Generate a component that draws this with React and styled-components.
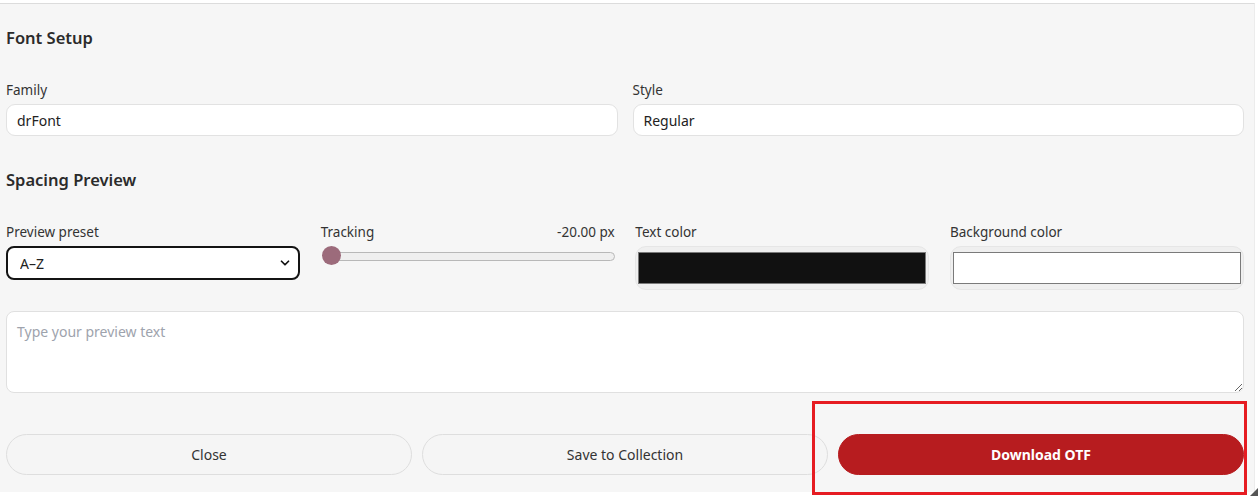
import React from 'react';
import styled, { createGlobalStyle } from 'styled-components';
import { ChevronDown } from 'lucide-react';

const GlobalStyle = createGlobalStyle`
  html, body {
    margin: 0;
    background: #ffffff;
    font-family: "Noto Sans", "Open Sans", Arial, sans-serif;
    color: #222;
  }
  * { box-sizing: border-box; }
`;

const Page = styled.div`
  position: relative;
  width: 1258px;
  height: 496px;
  padding-top: 3px;
  overflow: hidden;
`;

const Panel = styled.div`
  width: 1255px;
  height: 489px;
  background: #f6f6f6;
  border-top: 1px solid #dcdcdc;
  border-right: 1px solid #ececec;
  padding: 22px 10px 0 6px;
  display: flex;
  flex-direction: column;
`;

const Heading = styled.h2`
  margin: 0;
  font-size: 16.5px;
  line-height: 24px;
  font-weight: 600;
  color: #2b2b2b;
  margin-bottom: ${(p) => p.gap || 30}px;
`;

const TwoCols = styled.div`
  display: grid;
  grid-template-columns: 1fr 1fr;
  column-gap: 15px;
  margin-bottom: 32px;
`;

const FourCols = styled.div`
  display: grid;
  grid-template-columns: repeat(4, 1fr);
  column-gap: 20.7px;
  margin-bottom: 21px;
`;

const Field = styled.div`
  display: flex;
  flex-direction: column;
  min-width: 0;
`;

const LabelRow = styled.div`
  display: flex;
  justify-content: space-between;
  align-items: center;
  height: 20px;
  margin-bottom: 4px;
`;

const Label = styled.span`
  font-size: 13.5px;
  color: #333;
`;

const Value = styled.span`
  font-size: 13.5px;
  color: #333;
`;

const TextInput = styled.input`
  height: 32px;
  width: 100%;
  border: 1px solid #e2e2e2;
  border-radius: 9px;
  background: #fff;
  padding: 0 10px;
  font: inherit;
  font-size: 14px;
  color: #222;
  outline: none;
`;

const SelectWrap = styled.div`
  position: relative;
  width: 294px;
`;

const Select = styled.select`
  appearance: none;
  width: 100%;
  height: 34px;
  border: 2px solid #141414;
  border-radius: 8px;
  background: #fff;
  padding: 0 30px 0 12px;
  font: inherit;
  font-size: 14px;
  color: #222;
  outline: none;
`;

const Chevron = styled(ChevronDown)`
  position: absolute;
  right: 8px;
  top: 10px;
  pointer-events: none;
`;

const Slider = styled.div`
  position: relative;
  height: 20px;
  display: flex;
  align-items: center;
  padding-left: 2px;
`;

const Track = styled.div`
  flex: 1;
  height: 9px;
  border: 1px solid #b8b8b8;
  border-radius: 5px;
  background: #efefef;
`;

const Thumb = styled.div`
  position: absolute;
  left: 1px;
  top: 0;
  width: 19px;
  height: 19px;
  border-radius: 50%;
  background: #9c6b7b;
`;

const ColorWell = styled.div`
  height: 44px;
  border: 1px solid #e6e6e6;
  border-radius: 11px;
  background: #efefef;
  padding: 5px 2px;
`;

const Swatch = styled.div`
  height: 100%;
  border: 1px solid #7a7a7a;
  background: ${(p) => p.color};
`;

const TextArea = styled.textarea`
  display: block;
  width: 100%;
  height: 82px;
  border: 1px solid #e0e0e0;
  border-radius: 8px;
  background: #fff;
  padding: 10px 10px;
  font: inherit;
  font-size: 14px;
  color: #222;
  outline: none;
  margin-bottom: 41px;
  &::placeholder { color: #9ea3ad; }
`;

const Actions = styled.div`
  display: grid;
  grid-template-columns: repeat(3, 1fr);
  column-gap: 10px;
`;

const Button = styled.button`
  height: 41px;
  border-radius: 21px;
  font: inherit;
  font-size: 14px;
  cursor: pointer;
  border: 1px solid ${(p) => (p.primary ? '#b71c1f' : '#dedede')};
  background: ${(p) => (p.primary ? '#b71c1f' : '#f5f5f5')};
  color: ${(p) => (p.primary ? '#fff' : '#333')};
  font-weight: ${(p) => (p.primary ? 700 : 400)};
`;

const Highlight = styled.div`
  position: absolute;
  left: 812px;
  top: 401px;
  width: 435px;
  height: 94px;
  border: 3px solid #e61c22;
  pointer-events: none;
`;

const Grip = styled.div`
  position: absolute;
  right: 0;
  bottom: 0;
  width: 0;
  height: 0;
  border-left: 8px solid transparent;
  border-bottom: 8px solid #555;
`;

export default function App() {
  return (
    <Page>
      <GlobalStyle />
      <Panel>
        <Heading>Font Setup</Heading>
        <TwoCols>
          <Field>
            <LabelRow><Label>Family</Label></LabelRow>
            <TextInput defaultValue="drFont" />
          </Field>
          <Field>
            <LabelRow><Label>Style</Label></LabelRow>
            <TextInput defaultValue="Regular" />
          </Field>
        </TwoCols>

        <Heading>Spacing Preview</Heading>
        <FourCols>
          <Field>
            <LabelRow><Label>Preview preset</Label></LabelRow>
            <SelectWrap>
              <Select defaultValue="az">
                <option value="az">A–Z</option>
              </Select>
              <Chevron size={14} strokeWidth={3} color="#111" />
            </SelectWrap>
          </Field>
          <Field>
            <LabelRow>
              <Label>Tracking</Label>
              <Value>-20.00 px</Value>
            </LabelRow>
            <Slider>
              <Track />
              <Thumb />
            </Slider>
          </Field>
          <Field>
            <LabelRow><Label>Text color</Label></LabelRow>
            <ColorWell><Swatch color="#111111" /></ColorWell>
          </Field>
          <Field>
            <LabelRow><Label>Background color</Label></LabelRow>
            <ColorWell><Swatch color="#ffffff" /></ColorWell>
          </Field>
        </FourCols>

        <TextArea placeholder="Type your preview text" />

        <Actions>
          <Button>Close</Button>
          <Button>Save to Collection</Button>
          <Button primary>Download OTF</Button>
        </Actions>
      </Panel>
      <Highlight />
      <Grip />
    </Page>
  );
}
